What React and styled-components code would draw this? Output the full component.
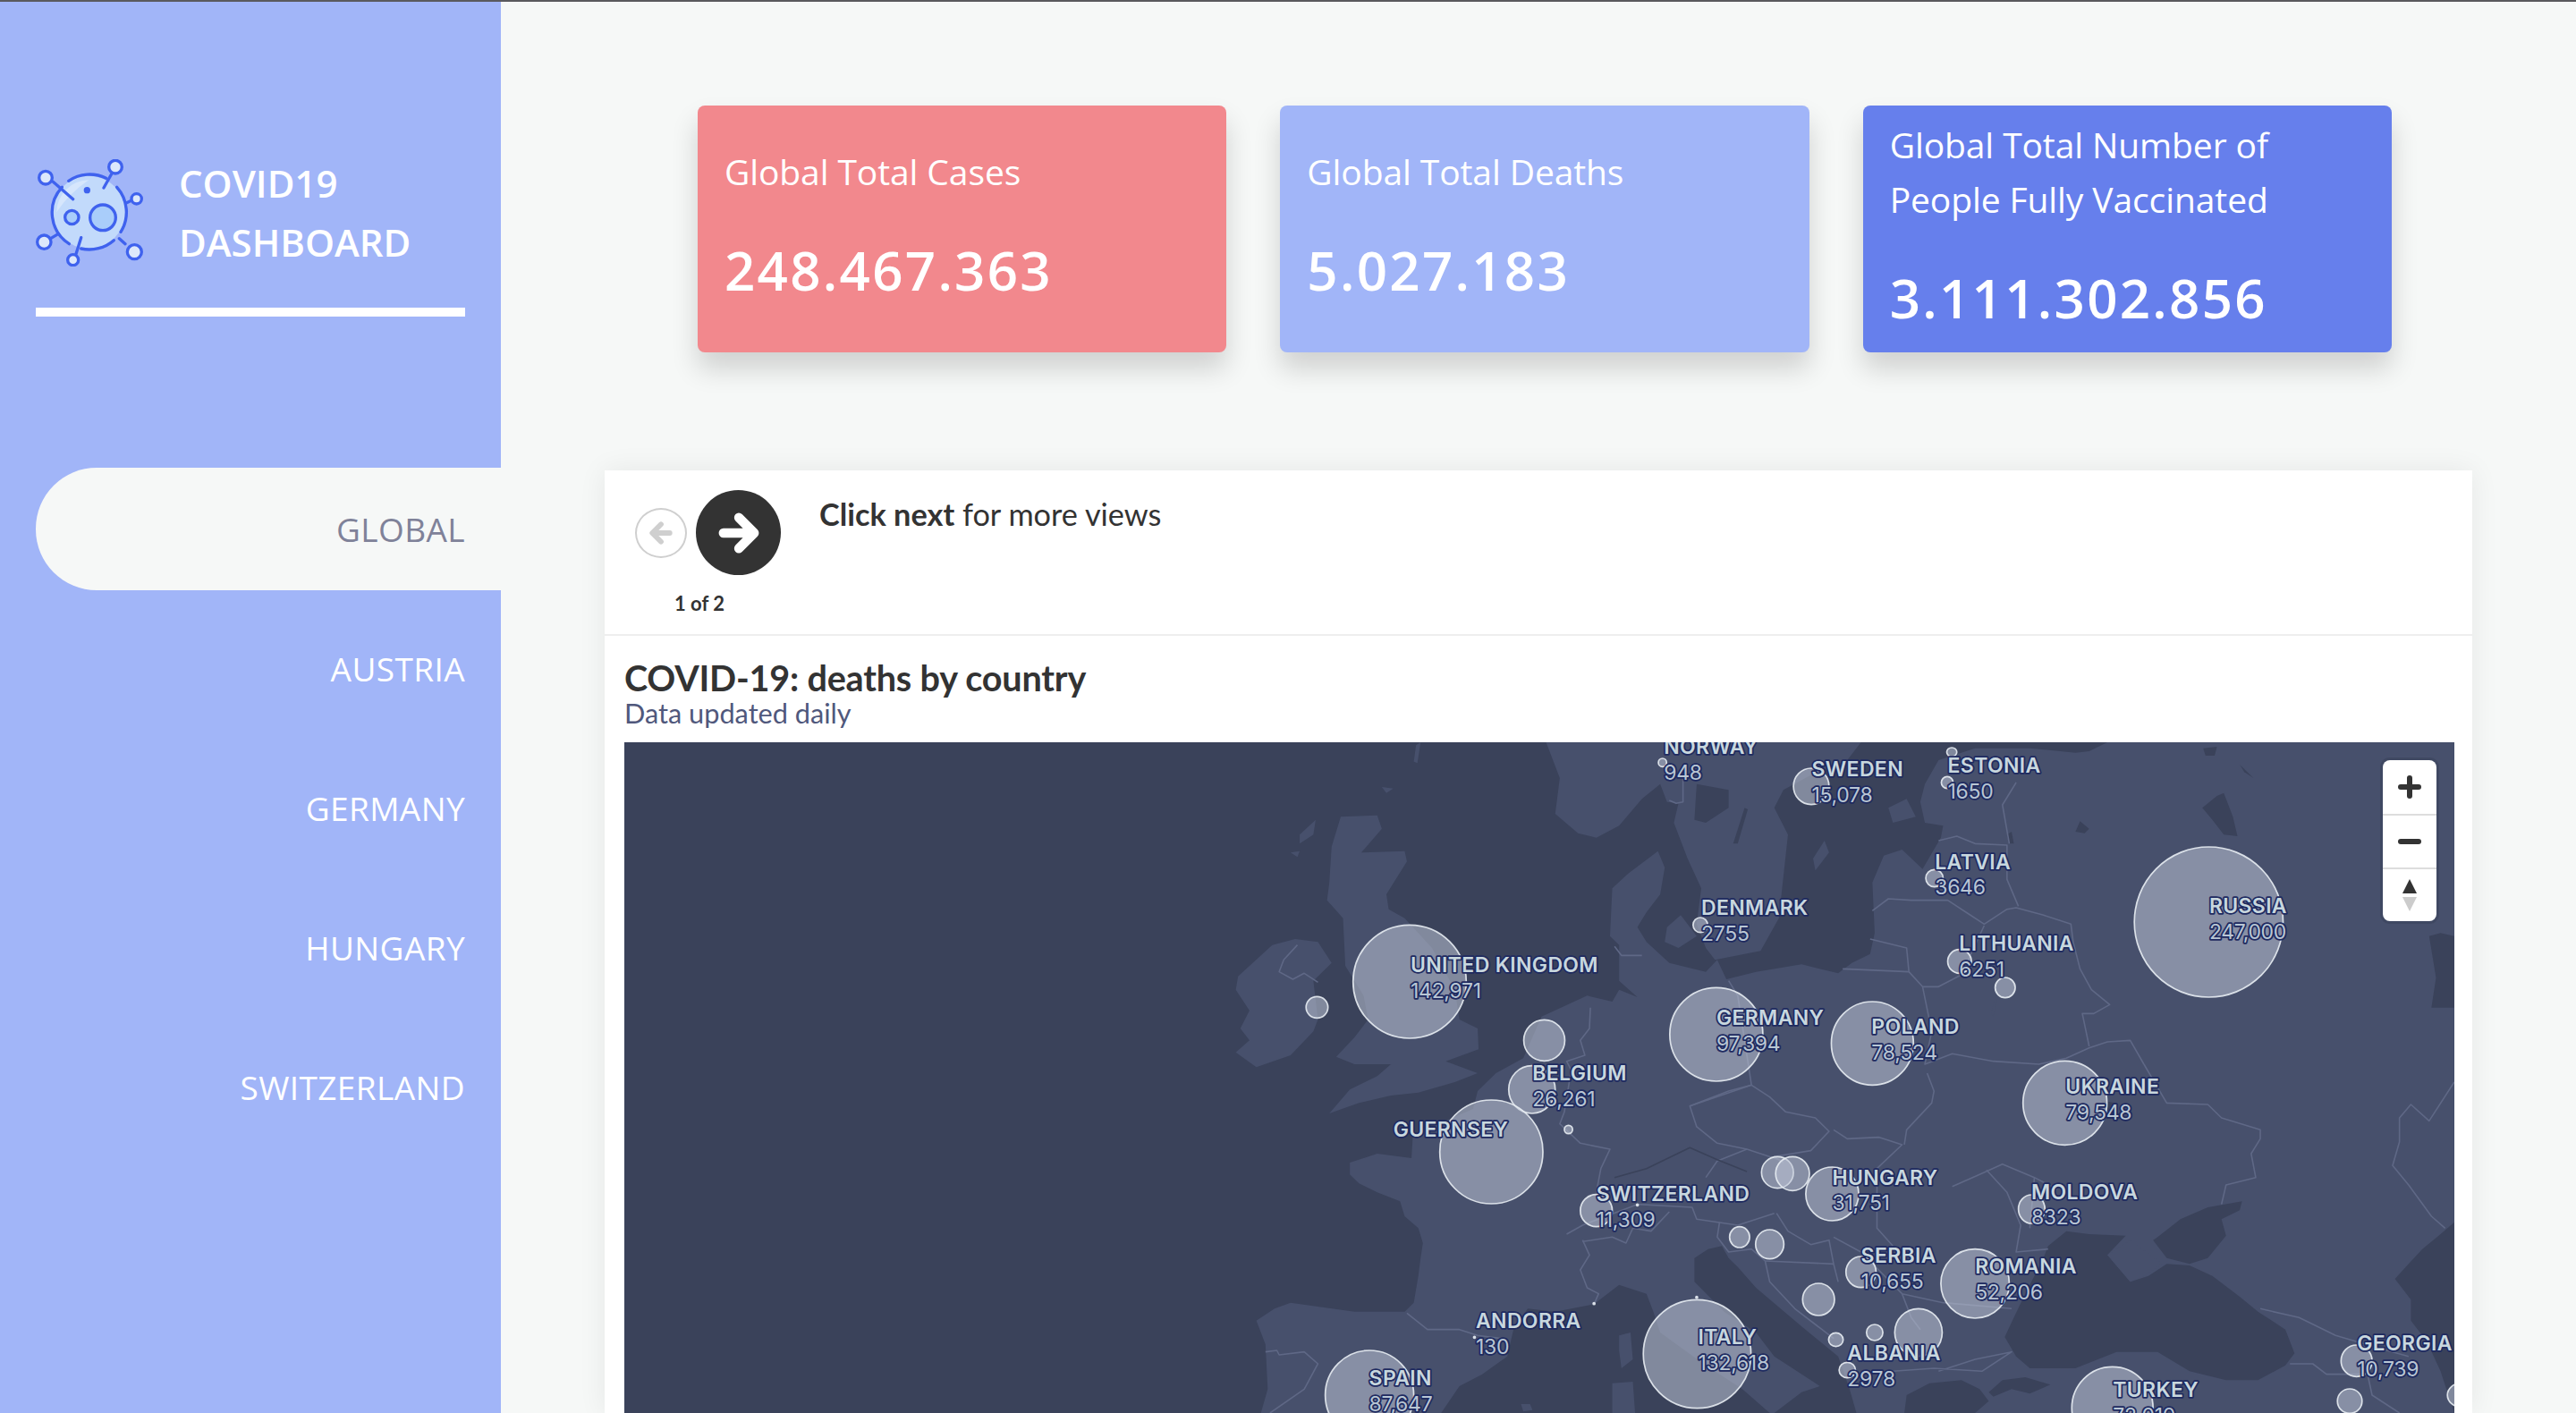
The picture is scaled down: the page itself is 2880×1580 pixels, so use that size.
import React from "react";
import styled, { createGlobalStyle } from "styled-components";

const Global = createGlobalStyle`
  html, body { margin: 0; padding: 0; width: 2880px; height: 1580px; overflow: hidden; background: #f6f8f7; }
  * { box-sizing: border-box; }
`;

const TopLine = styled.div`height: 2px; background: #5a5a5e;`;
const Shell = styled.div`display: flex; height: 1578px; overflow: hidden;`;
const Sidebar = styled.aside`
  width: 560px; flex: none; background: #a1b5f8; padding: 176px 0 0 40px;
  font-family: "Open Sans", sans-serif; color: #fff;
`;
const Brand = styled.div`display: flex; align-items: center; gap: 40px; height: 120px;`;
const BrandText = styled.div`font-size: 42px; line-height: 66px; font-weight: 600;`;
const Rule = styled.div`width: 480px; height: 10px; background: #fff; margin-top: 46px;`;
const Nav = styled.nav`display: flex; flex-direction: column; gap: 19px; margin-top: 169px;`;
const NavItem = styled.div`
  height: 137px; display: flex; align-items: center; justify-content: flex-end; padding-right: 40px;
  font-size: 37px; font-weight: 500; letter-spacing: .4px; border-radius: 68px 0 0 68px;
  background: ${p => (p.$active ? "#f6f8f7" : "transparent")};
  color: ${p => (p.$active ? "#7f8299" : "#fff")};
`;
const Main = styled.main`flex: 1; padding-top: 116px; min-width: 0;`;
const CardRow = styled.div`display: flex; gap: 60px; margin-left: 220px; width: 1894px;`;
const Card = styled.div`
  flex: 1; height: 276px; border-radius: 8px; padding: 0 30px 18px; color: #fff;
  display: flex; flex-direction: column; justify-content: center;
  background: ${p => p.$bg}; box-shadow: 0 18px 30px rgba(0,0,0,.16);
  font-family: "Open Sans", sans-serif;
`;
const CardLabel = styled.div`font-size: 39px; line-height: 61px; margin-bottom: 50px; font-weight: 500; letter-spacing: -.1px;`;
const CardValue = styled.div`font-size: 60px; line-height: 61px; font-weight: 600; letter-spacing: 2.3px;`;
const Panel = styled.section`
  margin: 132px 116px 0 116px; background: #fff; box-shadow: 0 0 30px rgba(0,0,0,.07);
  font-family: Lato, sans-serif; color: #333;
`;
const PanelHead = styled.div`display: flex; gap: 44px; height: 185px; padding: 22px 0 0 34px; border-bottom: 2px solid #eeeeee;`;
const Controls = styled.div`width: 163px;`;
const Buttons = styled.div`display: flex; align-items: center; gap: 10px;`;
const PrevBtn = styled.div`width: 58px; height: 56px; border-radius: 50%; border: 2px solid #cfcfcf; display: flex; align-items: center; justify-content: center;`;
const NextBtn = styled.div`width: 95px; height: 95px; border-radius: 50%; background: #333; display: flex; align-items: center; justify-content: center;`;
const Count = styled.div`width: 144px; margin-top: 18px; text-align: center; font-size: 22px; line-height: 28px; font-weight: 700;`;
const Message = styled.div`padding-top: 7px; margin-left: -1px; font-size: 34.3px; line-height: 40px; b { font-weight: 700; }`;
const PanelBody = styled.div`padding: 25px 20px 0 22px;`;
const Title = styled.h2`margin: 0; font-size: 39.6px; line-height: 44px; font-weight: 700; letter-spacing: -.2px;`;
const Sub = styled.div`font-size: 30.7px; line-height: 36px; color: #50587c; margin-bottom: 14px;`;
const MapBox = styled.div`position: relative; height: 750px; overflow: hidden; background: #3a425a;`;
const MapSvg = styled.svg`display: block; width: 2046px; height: 750px;`;
const Land = styled.polygon`fill: #47506c;`;
const Water = styled.polygon`fill: #3a425a;`;
const Border = styled.polyline`fill: none; stroke: ${p => p.$dark ? "#3a425a" : "#5f6886"}; stroke-width: 1.6; vector-effect: non-scaling-stroke; stroke-linejoin: round;`;
const Bubble = styled.ellipse`fill: rgba(190,198,214,.54); stroke: rgba(232,237,243,.9); stroke-width: 1.7; vector-effect: non-scaling-stroke;`;
const NameText = styled.text`
  font-family: Inter, sans-serif; font-size: 23px; font-weight: 600; fill: #c8d7de; letter-spacing: .35px;
  stroke: #1e2a60; stroke-width: 3.5px; paint-order: stroke; stroke-linejoin: round;
`;
const ValueText = styled.text`
  font-family: Inter, sans-serif; font-size: 23px; font-weight: 400; fill: #b9c6d4; letter-spacing: -.3px;
  stroke: #1e2a60; stroke-width: 3.5px; paint-order: stroke; stroke-linejoin: round;
`;
const MapCtl = styled.div`
  position: absolute; top: 20px; right: 20px; width: 60px; height: 180px; background: #fff; border-radius: 8px;
  box-shadow: 0 0 0 3px rgba(50,56,80,.35); display: flex; flex-direction: column;
`;
const CtlBtn = styled.div`
  height: 60px; display: flex; align-items: center; justify-content: center;
  border-top: ${p => (p.$first ? "none" : "2px solid #dddddd")};
`;

const land = [
  "215,2280 230,2200 225,2050 210,1990 205,1970 245,1930 280,1910 350,1925 420,1940 530,1940 550,1910 560,1820 565,1760 570,1710 560,1660 530,1620 520,1570 470,1540 430,1510 410,1480 410,1440 470,1410 545,1425 548,1350 620,1300 680,1260 690,1200 730,1140 790,1090 830,950 930,880 985,900 1000,860 1040,885 1000,830 1000,710 980,680 985,520 1020,470 1085,395 1100,450 1090,540 1060,600 1040,650 1060,700 1110,770 1190,800 1215,760 1235,825 1300,800 1400,775 1480,805 1510,770 1550,740 1560,670 1555,500 1580,410 1620,390 1665,455 1705,350 1710,310 1670,300 1660,230 1670,170 1700,90 1780,50 1900,50 2000,65 2030,60 2070,30 2830,30 2830,2280",
  "1530,30 1500,90 1420,140 1360,190 1340,250 1370,340 1360,480 1350,620 1310,730 1210,760 1190,720 1170,640 1180,520 1150,420 1120,300 1130,235 1105,230 1090,170 1050,220 1000,310 950,350 910,335 860,270 870,150 840,30",
  "165,815 240,710 290,690 340,700 370,770 330,830 340,960 330,1000 280,1080 205,1120 160,1070 190,1030 170,990 190,930 160,860",
  "390,280 470,275 480,320 435,400 530,395 535,430 490,540 495,590 530,620 590,720 640,860 650,960 690,990 692,1060 620,1100 690,1140 640,1170 560,1205 500,1215 430,1240 365,1275 410,1195 470,1150 500,1110 420,1110 380,1085 420,1020 450,960 440,880 400,780 395,620 360,560 365,500 370,380",
  "300,340 335,290 330,340 300,370",
  "280,400 300,395 295,415",
  "1105,650 1135,610 1170,680 1130,720 1100,700",
  "1425,420 1450,360 1460,400 1430,460",
  "1840,790 1845,780 1820,950 1815,940",
  "1590,250 1630,220 1650,280 1600,300",
  "1490,60 1520,35 1500,55",
];
const water = [
  "610,2280 650,2190 700,2150 755,2090 770,1990 800,1930 860,1940 945,1915 1000,1850 1060,1880 1075,1940 1090,2010 1180,2110 1270,2200 1330,2280",
  "1165,1760 1195,1730 1225,1720 1240,1760 1260,1790 1300,1860 1400,1990 1480,2090 1505,2200 1520,2280 1340,2280 1400,2210 1440,2190 1340,2090 1300,2010 1230,1940 1165,1840",
  "1845,2025 1865,1960 1890,1880 1930,1760 1940,1720 1980,1670 2030,1680 2110,1685 2070,1750 2120,1840 2160,1820 2200,1780 2250,1785 2300,1820 2360,1890 2400,1940 2460,2000 2480,2080 2460,2120 2400,2170 2330,2170 2250,2140 2180,2075 2090,2075 2000,2130 1900,2130 1870,2090",
  "2180,1690 2230,1630 2290,1590 2365,1570 2360,1600 2320,1630 2330,1685 2290,1760 2250,1780 2200,1760 2170,1700",
  "1625,2280 1630,2220 1680,2180 1750,2170 1790,2200 1810,2240 1780,2280",
  "1810,2210 1840,2170 1890,2160 1945,2185 1900,2215 1860,2200 1820,2225",
  "2830,1640 2800,1680 2760,1730 2730,1780 2700,1830 2735,1900 2735,1970 2770,2040 2800,2140 2830,2280",
  "1170,170 1240,190 1240,250 1190,300 1165,290",
  "1250,370 1275,250 1282,255 1260,370",
  "2278,250 2310,210 2325,200 2345,280 2355,345 2325,340 2300,290",
  "2775,680 2800,670 2830,680 2830,920 2780,920 2790,820",
  "2000,330 2010,295 2030,320 2020,335",
  "2280,50 2310,45 2305,75 2285,75",
  "2360,105 2390,150 2370,130",
  "1850,340 1860,330 1865,370 1855,370",
  "2055,1230 2085,1240 2095,1290 2070,1265",
];
const islands = [
  "1000,2020 1025,2010 1030,2100 1005,2130 1000,2070",
  "985,2180 1030,2175 1035,2280 985,2280",
  "785,2250 805,2250 810,2270 790,2275",
  "2070,1750 2120,1700 2190,1780 2150,1820 2120,1840",
  "480,180 505,185 490,200",
  "555,40 565,30 558,100 550,95",
];
const borders = [
  "1140,150 1140,230 1125,235 1110,225",
  "295,710 265,760 255,800 285,825 310,805 340,835",
  "990,715 1005,745 1050,745",
  "937,920 935,990 915,1030 925,1080 885,1100 895,1130 880,1270 870,1310 915,1375 980,1395 960,1460 950,1540",
  "1240,830 1260,880 1290,1180 1155,1250 1170,1320 1215,1375 1280,1395 1350,1430",
  "1155,1250 1240,1200 1290,1180 1330,1220 1365,1270 1430,1290 1460,1335 1420,1400 1340,1420 1360,1440",
  "1190,1490 1215,1435 1280,1395",
  "885,1680 920,1650 1040,1580 1160,1590 1170,1630 1260,1650 1340,1610",
  "920,1700 935,1750 915,1800 930,1860 955,1880 945,1915",
  "920,1705 985,1690 1015,1710 1030,1660 1070,1670 1110,1605",
  "535,1945 580,2000 650,2000 690,2020 740,2030",
  "225,2075 250,2070 255,2085 310,2075 340,2115 310,2200 235,2280",
  "1220,1640 1215,1690 1240,1740 1290,1730 1320,1770 1330,1840 1385,1930 1470,2030",
  "1345,1610 1370,1670 1420,1715 1460,1700 1470,1780 1480,1840",
  "1320,1770 1470,1780",
  "1555,595 1590,555 1640,560 1720,560 1760,600 1800,640 1850,590 1870,585 1930,610 1990,640 1995,700 2010,790 2035,860 2075,910 2040,940 2015,940 2030,1050",
  "1700,360 1740,345 1780,370 1850,375 1850,490 1875,580",
  "1870,165 1840,240 1855,370",
  "1490,790 1635,800 1630,720 1550,690",
  "1635,800 1665,850 1700,850 1750,810 1800,645",
  "1665,850 1685,1000 1670,1110 1730,1075 1820,1100 1920,1110 1980,1090 2030,1055 2070,1035 2120,1030 2150,1110",
  "1675,1140 1690,1200 1685,1240 1630,1330 1625,1380",
  "1470,1330 1500,1360 1570,1355 1620,1380 1565,1460 1565,1660 1600,1720",
  "1730,1520 1790,1480 1840,1445 1910,1490 1960,1530",
  "1805,1465 1850,1540 1880,1650 1870,1740 1940,1730",
  "1910,1490 1900,1660",
  "2150,1110 2200,1240 2290,1245 2320,1290 2405,1330 2405,1360 2385,1410 2395,1490 2330,1515 2320,1580",
  "1470,1690 1530,1740 1620,1880 1710,1910 1860,1930",
  "1620,1880 1640,1960 1660,2000",
  "1700,2140 1780,2100 1860,2075 1795,2140 1690,2130 1600,2140",
  "2405,1930 2490,1960 2570,2020 2660,2060 2730,2090",
  "2470,2115 2520,2115 2550,2150 2640,2150 2650,2220 2710,2280",
  "2810,1660 2780,1620 2730,1515 2695,1450 2710,1370 2710,1290 2735,1245 2775,1300 2830,1170",
];
const bubbles = [
  [541,833,124,190],[338,919,24,36],[836,1030,45,69],[1213,1010,102,157],[1555,1040,90,140],[809,1195,51,80],
  [1095,98,9,14],[1421,178,39,61],[1178,643,16,25],[1729,63,11,15],[1719,165,13,20],[1691,486,19,29],[1746,765,26,40],
  [1846,853,22,34],[2292,633,163,252],[720,1404,113,174],[889,1329,9,14],[950,1601,35,54],[1347,1473,35,53],
  [1380,1477,37,57],[1467,1545,58,90],[1264,1690,22,35],[1330,1714,31,49],[1530,1807,33,52],[1437,1899,35,54],
  [1171,2082,118,182],[1170,1892,2,3],[453,2220,97,150],[683,2026,2,3],[1040,1582,2,3],[945,1913,2,3],[1475,2034,16,23],[1500,2136,18,26],[1560,2010,18,27],
  [1977,1240,92,141],[1904,1596,29,48],[1780,1846,75,116],[1656,2010,52,80],[2081,2263,89,138],[2616,2105,34,53],
  [2601,2240,27,41],[2845,2220,30,40],
];
const labels = [
  ["NORWAY","948",1098,68,155],["SWEDEN","15,078",1422,145,232],["DENMARK","2755",1180,610,697],
  ["UNITED KINGDOM","142,971",543,800,887],["GERMANY","97,394",1213,978,1065],["BELGIUM","26,261",810,1165,1250],
  ["POLAND","78,524",1553,1008,1095],["ESTONIA","1650",1720,132,218],["LATVIA","3646",1692,455,541],
  ["LITHUANIA","6251",1745,730,817],["RUSSIA","247,000",2293,603,690],["UKRAINE","79,548",1978,1208,1295],
  ["GUERNSEY","",505,1353,0],["SWITZERLAND","11,309",950,1570,1657],["HUNGARY","31,751",1467,1515,1600],
  ["ANDORRA","130",686,1995,2081],["SPAIN","87,647",452,2187,2274],["ITALY","132,618",1173,2050,2137],
  ["SERBIA","10,655",1530,1775,1862],["ALBANIA","2978",1500,2103,2190],["MOLDOVA","8323",1903,1562,1648],
  ["ROMANIA","52,206",1780,1813,1900],["TURKEY","72,010",2082,2227,2314],["GEORGIA","10,739",2617,2070,2157],
];
const mx = x => 602 + x / 1.96;
const my = y => y / 3 - 10;

const stroke = { fill: "none", stroke: "#3f62ee", strokeWidth: 10, strokeLinecap: "round" };
const Logo = () => (
  <svg width="120" height="120" viewBox="60 54 360 360">
    <circle cx="238" cy="232" r="122" fill="#c2dafb" />
    <path d="M130 232 A108 108 0 0 1 238 124 Q170 170 130 232Z" fill="#d6e6fc" />
    <g {...stroke}>
      <path d="M170 127 A125 125 0 0 1 296 118" />
      <path d="M332 148 A125 125 0 0 1 345 298" />
      <path d="M322 326 A125 125 0 0 1 212 354" />
      <path d="M172 338 A125 125 0 0 1 148 148" />
      <path d="M185 188 L118 130 M288 150 L315 102 M365 200 L382 192 M340 320 L360 338 M135 305 L110 320 M212 317 L195 372" />
    </g>
    <g stroke="#3f62ee" strokeWidth="10" fill="#dde8fb">
      <circle cx="93" cy="116" r="22" /><circle cx="327" cy="80" r="22" /><circle cx="398" cy="187" r="17" />
      <circle cx="391" cy="365" r="24" /><circle cx="88" cy="332" r="23" /><circle cx="185" cy="392" r="18" />
    </g>
    <g stroke="#3f62ee" strokeWidth="10" fill="#a9cdfa">
      <circle cx="181" cy="249" r="23" /><circle cx="285" cy="250" r="43" />
    </g>
    <circle cx="232" cy="158" r="11" fill="#3f62ee" />
  </svg>
);

const Arrow = ({ size, color, width }) => (
  <svg width={size} height={size} viewBox="0 0 40 40" fill="none" stroke={color} strokeWidth={width} strokeLinecap="round" strokeLinejoin="round">
    <path d="M5 20 H34 M20 5 L35 20 L20 35" />
  </svg>
);

const Back = () => (
  <svg width="26" height="26" viewBox="0 0 40 40" fill="none" stroke="#cfcfcf" strokeWidth="9" strokeLinecap="round" strokeLinejoin="round">
    <path d="M35 20 H6 M20 5 L5 20 L20 35" />
  </svg>
);

const EuropeMap = () => (
  <MapSvg viewBox="0 0 2046 750">
    <g transform="translate(602,-10) scale(0.5102,0.33333)">
      {land.map((p, i) => <Land key={i} points={p} />)}
      {water.map((p, i) => <Water key={i} points={p} />)}
      {islands.map((p, i) => <Land key={i} points={p} />)}
      {borders.map((p, i) => <Border key={i} points={p} />)}
      <Border $dark points="990,1490 1060,1460 1155,1390 1215,1430 1280,1470" />
      {bubbles.map(([cx, cy, rx, ry], i) => <Bubble key={i} cx={cx} cy={cy} rx={rx} ry={ry} />)}
    </g>
    {labels.map(([name, value, x, y1, y2]) => (
      <g key={name}>
        <NameText x={mx(x)} y={my(y1)}>{name}</NameText>
        {value && <ValueText x={mx(x)} y={my(y2)}>{value}</ValueText>}
      </g>
    ))}
  </MapSvg>
);

const cards = [
  { bg: "#f2888d", label: "Global Total Cases", value: "248.467.363" },
  { bg: "#a1b5f8", label: "Global Total Deaths", value: "5.027.183" },
  { bg: "#667fec", label: "Global Total Number of People Fully Vaccinated", value: "3.111.302.856" },
];
const nav = ["GLOBAL", "AUSTRIA", "GERMANY", "HUNGARY", "SWITZERLAND"];

export default function App() {
  return (
    <>
      <Global />
      <TopLine />
      <Shell>
        <Sidebar>
          <Brand>
            <Logo />
            <BrandText>COVID19<br />DASHBOARD</BrandText>
          </Brand>
          <Rule />
          <Nav>
            {nav.map((n, i) => <NavItem key={n} $active={i === 0}>{n}</NavItem>)}
          </Nav>
        </Sidebar>
        <Main>
          <CardRow>
            {cards.map(c => (
              <Card key={c.label} $bg={c.bg}>
                <CardLabel>{c.label}</CardLabel>
                <CardValue>{c.value}</CardValue>
              </Card>
            ))}
          </CardRow>
          <Panel>
            <PanelHead>
              <Controls>
                <Buttons>
                  <PrevBtn><Back /></PrevBtn>
                  <NextBtn><Arrow size={46} color="#fff" width={9} /></NextBtn>
                </Buttons>
                <Count>1 of 2</Count>
              </Controls>
              <Message><b>Click next</b> for more views</Message>
            </PanelHead>
            <PanelBody>
              <Title>COVID-19: deaths by country</Title>
              <Sub>Data updated daily</Sub>
              <MapBox>
                <EuropeMap />
                <MapCtl>
                  <CtlBtn $first>
                    <svg width="26" height="26" viewBox="0 0 26 26" stroke="#333" strokeWidth="6" strokeLinecap="round"><path d="M13 3V23M3 13H23" /></svg>
                  </CtlBtn>
                  <CtlBtn>
                    <svg width="26" height="8" viewBox="0 0 26 8" stroke="#333" strokeWidth="6" strokeLinecap="round"><path d="M3 4H23" /></svg>
                  </CtlBtn>
                  <CtlBtn>
                    <svg width="18" height="36" viewBox="0 0 18 36"><path d="M9 0L17 16H1Z" fill="#333" /><path d="M9 36L17 20H1Z" fill="#ccc" /></svg>
                  </CtlBtn>
                </MapCtl>
              </MapBox>
            </PanelBody>
          </Panel>
        </Main>
      </Shell>
    </>
  );
}
